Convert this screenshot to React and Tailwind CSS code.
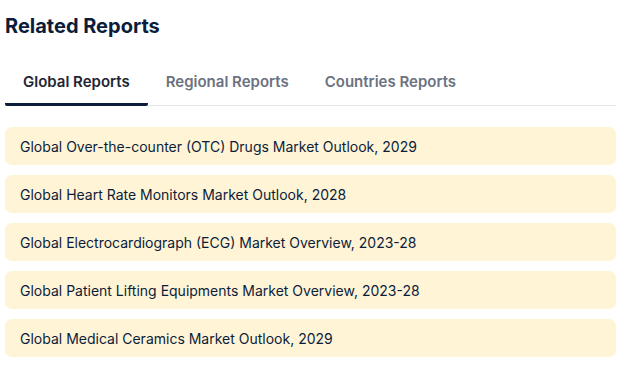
import { useState } from 'react';

const tabs = ['Global Reports', 'Regional Reports', 'Countries Reports'];

const reports = [
  'Global Over-the-counter (OTC) Drugs Market Outlook, 2029',
  'Global Heart Rate Monitors Market Outlook, 2028',
  'Global Electrocardiograph (ECG) Market Overview, 2023-28',
  'Global Patient Lifting Equipments Market Overview, 2023-28',
  'Global Medical Ceramics Market Outlook, 2029',
];

export default function App() {
  const [active, setActive] = useState(0);

  return (
    <div className="min-h-screen bg-white px-[5px] pt-[12px] font-['Inter',sans-serif]">
      <div className="w-[611px]">
        <h2 className="text-[20px] leading-[28px] font-bold text-[#0b1d3a]">Related Reports</h2>

        <div className="mt-[31px] flex border-b border-[#e5e7eb]">
          {tabs.map((t, i) => (
            <button
              key={t}
              onClick={() => setActive(i)}
              className={
                'px-[18px] pb-[10px] text-[15px] leading-[22px] font-semibold -mb-px border-b-[3px] ' +
                (active === i ? 'text-[#1f2533] border-[#0b1d3a] rounded-b-[2px]' : 'text-[#6b7280] border-transparent')
              }
            >
              {t}
            </button>
          ))}
        </div>

        <div className="mt-[21px] flex flex-col gap-[10px]">
          {reports.map(r => (
            <div key={r} className="h-[38px] flex items-center px-[15px] rounded-[7px] bg-[#fff4d6] text-[14px] text-[#0b1d3a]">
              {r}
            </div>
          ))}
        </div>
      </div>
    </div>
  );
}
